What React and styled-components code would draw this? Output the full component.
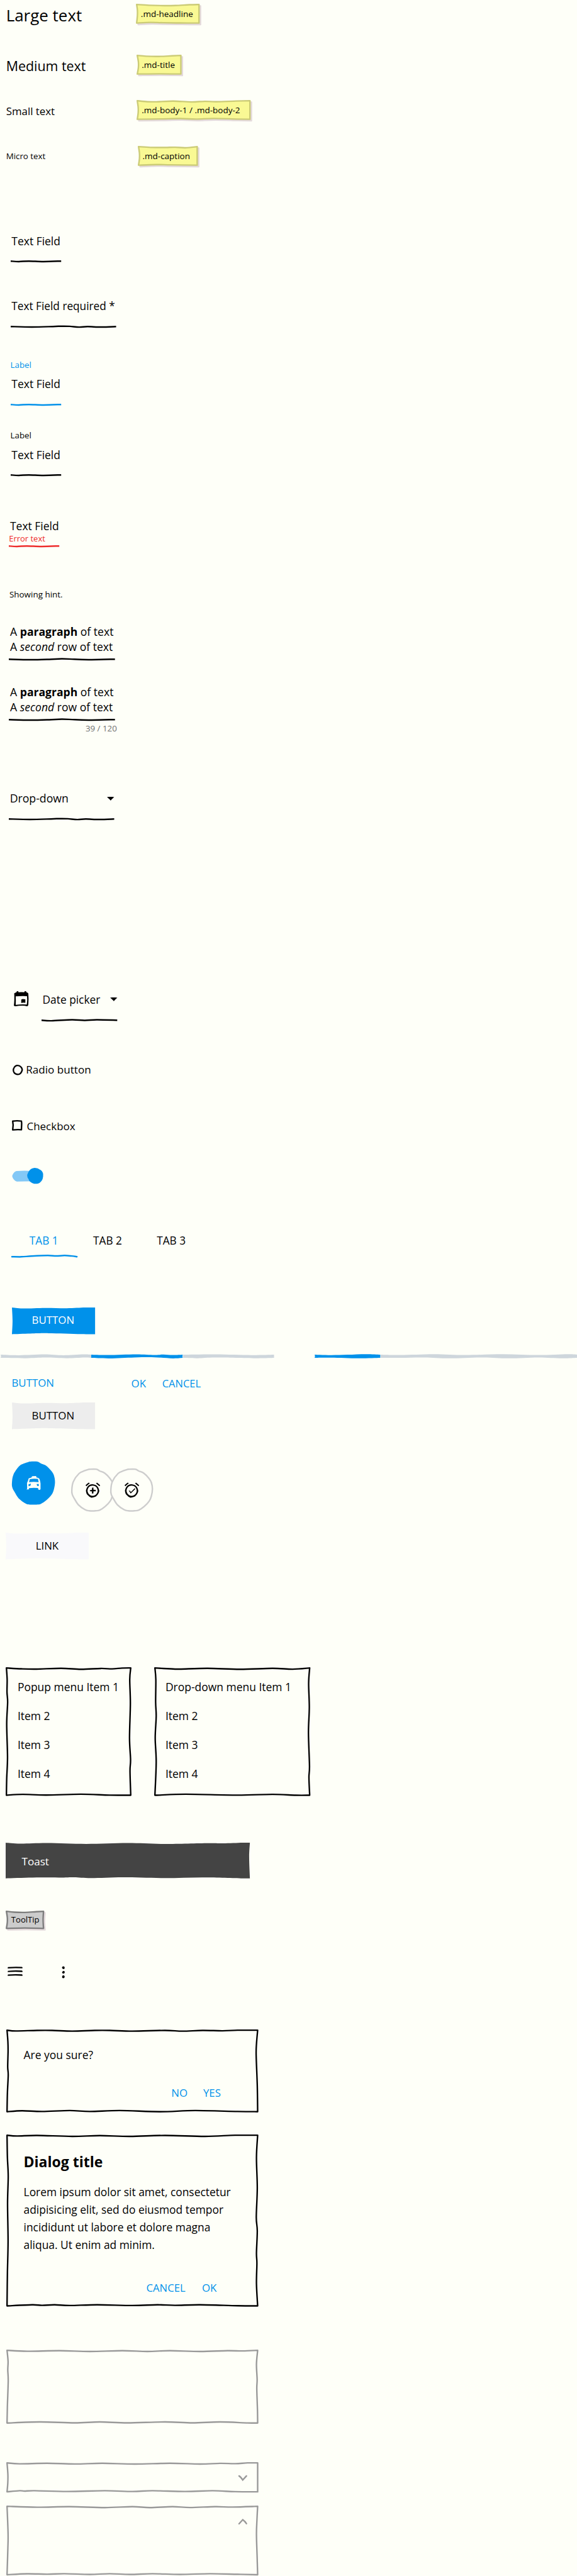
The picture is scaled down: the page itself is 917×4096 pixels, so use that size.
import React from "react";
import styled, { createGlobalStyle } from "styled-components";

/* Design units to CSS pixels */
const UNIT = 0.5899;
const u = (n = 0) => `${+(n * UNIT).toFixed(3)}px`;

const color = {
  paper: "#fefff8",
  ink: "#000000",
  accent: "#0091ea",
  accentSoft: "#83c8f6",
  error: "#ee2c2c",
  muted: "#6f6f6f",
  line: "#999999",
};

const GlobalStyle = createGlobalStyle`
  html, body { margin: 0; padding: 0; background: ${color.paper}; }
  * { box-sizing: border-box; }
`;

/* ---------- hand-drawn shapes ---------- */

const smooth = (pts) =>
  pts
    .slice(0, -1)
    .map((p, i) => {
      const a = pts[i - 1] || p;
      const b = pts[i + 1];
      const c = pts[i + 2] || b;
      const n = [
        p[0] + (b[0] - a[0]) / 6,
        p[1] + (b[1] - a[1]) / 6,
        b[0] - (c[0] - p[0]) / 6,
        b[1] - (c[1] - p[1]) / 6,
        b[0],
        b[1],
      ];
      return `C${n.map((v) => v.toFixed(2)).join(" ")}`;
    })
    .join("");

const ends = (edge = []) => [[0, 0], ...edge, [100, 0]];

/* Each edge lists [percent along the edge, inward offset]. */
const framePath = (w, h, inset, { top, right, bottom, left }) => {
  const iw = w - inset * 2;
  const ih = h - inset * 2;
  const t = ends(top).map(([p, d]) => [inset + (iw * p) / 100, inset + d]);
  const r = ends(right).map(([p, d]) => [w - inset - d, inset + (ih * p) / 100]);
  const b = ends(bottom).map(([p, d]) => [inset + (iw * p) / 100, h - inset - d]).reverse();
  const l = ends(left).map(([p, d]) => [inset + d, inset + (ih * p) / 100]).reverse();
  return `M${inset} ${inset}${smooth(t)}${smooth(r)}${smooth(b)}${smooth(l)}Z`;
};

const Backdrop = styled.svg`
  position: absolute;
  inset: 0;
  width: 100%;
  height: 100%;
  overflow: visible;
  z-index: 0;
`;

const Drawing = styled.svg`
  display: block;
  flex: none;
  overflow: visible;
  width: ${(p) => u(p.$w)};
  height: ${(p) => u(p.$h)};
  margin-top: ${(p) => u(p.$mt)};
  margin-left: ${(p) => u(p.$ml)};
`;

function Sketch({ w, h, edges = {}, fill = "none", stroke, shadow }) {
  const d = framePath(w, h, stroke ? 2 : 0, edges);
  return (
    <Backdrop viewBox={`0 0 ${w} ${h}`} preserveAspectRatio="none" aria-hidden="true">
      {shadow && (
        <path d={d} transform="translate(4 4)" fill={shadow} stroke={shadow} strokeWidth="4" strokeLinejoin="round" />
      )}
      <path d={d} fill={fill} stroke={stroke || "none"} strokeWidth={stroke ? 4 : 0} strokeLinejoin="round" />
    </Backdrop>
  );
}

const waves = {
  short: [[16, 1.3], [36, 0], [65, 1.3]],
  long: [[20, 1.3], [40, 0], [49, -0.9], [56, -0.5], [65, 1.6], [73, 0.3], [86, 1.5]],
  para: [[20, 1.5], [38, 0.4], [50, -1.2], [62, 0.2], [78, 1.3]],
  date: [[13, 1.6], [40, -1.2], [57, 0.4], [73, -1.2]],
  tab: [[15, 0.3], [30, -1.5], [55, -3.2], [68, -1.9], [81, -3.2], [92, -1.8]],
};

function Underline({ w, gap, wave, stroke = color.ink, round }) {
  const pts = ends(waves[wave]).map(([p, d]) => [(w * p) / 100, 2 + d]);
  return (
    <Drawing $w={w} $h={4} $mt={gap} viewBox={`0 0 ${w} 4`} aria-hidden="true">
      <path
        d={`M0 2${smooth(pts)}`}
        fill="none"
        stroke={stroke}
        strokeWidth="4.2"
        strokeLinecap={round ? "round" : "butt"}
      />
    </Drawing>
  );
}

/* ---------- layout and text ---------- */

const Page = styled.main`
  width: 917px;
  height: 4096px;
  overflow: hidden;
  padding-top: ${u(10)};
  background: ${color.paper};
  color: ${color.ink};
  font-family: "Open Sans", "Noto Sans", sans-serif;
  font-size: ${u(29.6)};
`;

const Row = styled.div`
  display: flex;
  align-items: ${(p) => p.$align || "flex-start"};
  margin-top: ${(p) => u(p.$gap)};
  padding-left: ${(p) => u(p.$left)};
`;

const Text = styled.div`
  font-size: ${(p) => u(p.$size || 29.6)};
  line-height: ${(p) => u(p.$lh || 40)};
  font-weight: ${(p) => p.$weight || 400};
  color: ${(p) => p.$color || "inherit"};
  margin-left: ${(p) => u((p.$ml || 0) + 1.3)};
  margin-top: ${(p) => u(p.$mt)};
  padding-top: ${u(1.3)};
  margin-bottom: ${u(-1.3)};
  white-space: nowrap;
`;

const Sample = styled(Text)`
  flex: none;
  width: ${(p) => u(p.$w)};
  margin-left: 0;
  padding-left: ${u(16.4)};
`;

const Panel = styled.div`
  position: relative;
  flex: none;
  width: ${(p) => u(p.$w)};
  height: ${(p) => u(p.$h)};
  margin-left: ${(p) => u(p.$ml)};
`;

const PanelBody = styled.div`
  position: relative;
  padding: ${(p) => u(p.$top)} 0 0 ${(p) => u(p.$left)};
`;

const NoteText = styled(Text)`
  position: relative;
  padding-left: ${(p) => u(p.$pad)};
`;

function Note({ w, x, edges, children }) {
  return (
    <Panel $w={w} $h={54} $ml={x}>
      <Sketch w={w} h={54} edges={edges} fill="#f9f994" stroke="#cbcb76" shadow="#e4dadc" />
      <NoteText $size={22.9} $lh={54} $pad={12.2}>{children}</NoteText>
    </Panel>
  );
}

const FieldBox = styled.div`
  display: flex;
  flex-direction: column;
  align-items: flex-start;
  margin-top: ${(p) => u(p.$gap)};
  margin-left: ${(p) => u(p.$x)};
  width: ${(p) => u(p.$w)};
`;

const Caption = styled(Text)`
  align-self: ${(p) => (p.$end ? "flex-end" : "flex-start")};
  margin-right: ${(p) => (p.$end ? u(-5) : 0)};
`;

const SelectRow = styled.div`
  display: flex;
  justify-content: space-between;
  align-items: flex-start;
  width: 100%;
`;

function Caret({ mt }) {
  return (
    <Drawing $w={19.5} $h={10.5} $mt={mt} viewBox="0 0 19.5 10.5" aria-hidden="true">
      <path d="M0 .8C6 -.3 14 -.2 19.5 .8C16 3.5 12 7.5 10 10.3C7.5 6.5 4 4 0 .8Z" fill="#000" />
    </Drawing>
  );
}

/* ---------- buttons ---------- */

const buttonEdges = {
  top: [[13, 2.7], [40, 1.2], [66, 2], [88, 0]],
  bottom: [[22, 1.6], [44, 2.7], [83, 0.4]],
  left: [[50, 1.6]],
};

const ButtonText = styled(Text)`
  position: relative;
  margin-left: ${u(-2)};
  text-align: center;
  text-transform: uppercase;
`;

function Button({ fill, ink, children, lh = 68 }) {
  return (
    <Panel $w={224} $h={72}>
      <Sketch w={224} h={72} edges={buttonEdges} fill={fill} />
      <ButtonText $size={28.6} $lh={lh} $color={ink}>{children}</ButtonText>
    </Panel>
  );
}

const Action = styled(Text)`
  flex: none;
  width: ${(p) => u(p.$w)};
  color: ${color.accent};
`;

/* ---------- icons ---------- */

const CIRCLE = [
  [48, 0], [68, 0], [78, 5], [92, 11], [106, 25], [113, 37], [116, 55], [113, 75], [107, 89], [93, 104],
  [78, 114], [66, 116], [49, 116], [37, 113], [18, 99], [7, 82], [1, 70], [0, 57], [4, 35], [20, 12], [36, 4], [48, 0],
];
const circlePath = `M48 0${smooth(CIRCLE)}Z`;

function CalendarIcon() {
  return (
    <Drawing $w={40} $h={41} $mt={-2} viewBox="0 0 40 41" aria-hidden="true">
      <path
        fillRule="evenodd"
        d="M1 6C3 4.500 5 4 7 3L8 .5Q10.500 -.8 12 .5L12.500 3Q20 2 28 3L29 .5Q31 -.8 33 .5L34 3Q38 3.500 39 6.500Q40.500 20 39 37Q38.500 40 36 40.500Q33 40 30 39.300Q15 38.800 5 40.500Q2 41 0 39Q2 25 1 6ZM5 14Q20 12.800 35.500 13.500Q36.800 24 35 36.200Q22 35 5 36.800Q5.800 25 5 14Z"
      />
      <path d="M20 22.500L24 21.400L31 22L31 31.500L25.500 30.800L19.800 31.800Z" />
    </Drawing>
  );
}

function TaxiIcon() {
  return (
    <path
      transform="translate(40 39)"
      fill={color.paper}
      fillRule="evenodd"
      d="M13 2L15 .6L25 0L26 4L31 5L34 7.500L36 14L37 20L37 35Q36 38 31.500 37L30 32.300Q18 31 6 32.500L5.500 36.500L3 35.500L0 37.500L1 32L.5 19L3.500 12L5 6.500L13 4ZM8 8.300Q18 6 30 7.800L32 16.500Q18 15 6 16.500ZM4.500 22.500L11 20.500L10 26L5 27.500ZM26.500 21.500L32 21L32.500 26.500L28 26.800Z"
    />
  );
}

function AlarmIcon({ kind }) {
  return (
    <g transform="translate(39 38)">
      <path d="M0 7L8 0L11.500 1.500L2 10ZM28 2L31 0L39 7L38 10L34 7.500Z" />
      <path
        fillRule="evenodd"
        d="M1 21Q3 11 10 6.500Q19 2 28 7Q35 11 37 22Q36 30 28 37.500Q22 40 16 41Q10 39 7 35Q1 31 1 21ZM5.300 21.800C5.300 28 11 35.800 19 35.800C26.500 35.800 32.600 29 32.600 21.800C32.600 14 26.500 8 19 8C11.500 8 5.300 14 5.300 21.800Z"
      />
      {kind === "add" ? (
        <path d="M17.500 13.500L21 13.200L21.300 19.300L27.600 19.500L27.300 23.500L21.300 23.500L21 29.500L16.800 29.500L17.500 24L11.200 23L12 20.500L17 19.800Z" />
      ) : (
        <path d="M11 21.500L14.500 22L17 25.500L27 15.500L29 17L16.500 29.200Z" />
      )}
    </g>
  );
}

function Fab() {
  return (
    <Drawing $w={116} $h={116} viewBox="0 0 116 116" aria-label="Taxi">
      <path d={circlePath} fill={color.accent} />
      <TaxiIcon />
    </Drawing>
  );
}

function RoundIconButton({ kind, ml }) {
  return (
    <Drawing $w={116} $h={116} $mt={18} $ml={ml} viewBox="0 0 116 116" aria-label={kind}>
      <path
        d={circlePath}
        transform="translate(2 2) scale(.9655)"
        fill={color.paper}
        stroke="#cdcdcd"
        strokeWidth="4.200"
      />
      <AlarmIcon kind={kind} />
    </Drawing>
  );
}

/* ---------- progress ---------- */

function Segment({ w, fill, edges }) {
  return (
    <Panel $w={w} $h={8.6}>
      <Sketch w={w} h={8.6} edges={edges} fill={fill} />
    </Panel>
  );
}

const TRACK = "#ced6dc";

function Progress() {
  return (
    <Row $gap={56} $left={1}>
      <Segment
        w={245.5}
        fill={TRACK}
        edges={{
          top: [[20, 1.5], [48, -0.8], [69, 1.5], [91, -0.8]],
          bottom: [[28, -1], [49, 0.8], [73, -1], [92, 0.8]],
          left: [[50, 1]],
        }}
      />
      <Segment
        w={246.5}
        fill={color.accent}
        edges={{
          top: [[18, 1], [49, -1], [69, 0.8], [79, -0.4], [89, 1]],
          bottom: [[20, -1.5], [47, 1], [69, 1.5], [89, -1.5]],
          right: [[50, 0.5]],
        }}
      />
      <Segment
        w={245}
        fill={TRACK}
        edges={{ top: [[36, -0.8], [75, 1.2]], bottom: [[16, -1], [36, 1], [80, -1]] }}
      />
      <Panel $w={110} $h={8} />
      <Segment
        w={177}
        fill={color.accent}
        edges={{ top: [[25, 1.3], [50, 0.2], [78, -1.3]], bottom: [[25, 0.7], [67, -1.3]], left: [[50, 1]] }}
      />
      <Segment
        w={531}
        fill={TRACK}
        edges={{
          top: [[10, 1], [27, -1.3], [43, 1], [62, -1.3], [80, 1], [95, -1.3]],
          bottom: [[10, 0], [22, 1], [35, -1.3], [52, 1], [65, -1.3], [80, 1], [92, -1.3]],
        }}
      />
    </Row>
  );
}

/* ---------- menus ---------- */

const popupEdges = {
  top: [[12, 2.3], [24, 3], [44, 1], [60, 3.5], [76, 1.3], [85, 2.5], [93, 0.3]],
  bottom: [[13, 2.3], [32, 0.5], [60, 2.7], [83, 0.2]],
  left: [[9, 2], [19, 1.6], [27, 3.3], [44, 0.8], [70, 3], [87, 0.8]],
  right: [[9, 2.7], [28, 1], [55, 3.3], [72, 0.5], [81, 2]],
};
const dropEdges = {
  top: [[10, 2.3], [16, 3], [34, 1], [55, 3.5], [76, 1], [89, 3.3]],
  bottom: [[3, 0.3], [20, 2.7], [53, 0.3], [76, 2.3], [91, 0]],
  left: [[9, 2.5], [27, 2], [38, 3.5], [55, 0.8], [74, 3.5]],
  right: [[12, 2.8], [31, 1], [51, 3.3], [77, 0.5], [86, 2]],
};

function Menu({ w, ml, edges, items }) {
  return (
    <Panel $w={w} $h={347} $ml={ml}>
      <Sketch w={w} h={347} edges={edges} stroke={color.ink} />
      <PanelBody $top={13.2} $left={30}>
        {items.map((item) => (
          <Text key={item} $lh={78}>{item}</Text>
        ))}
      </PanelBody>
    </Panel>
  );
}

/* ---------- panels ---------- */

const confirmEdges = {
  top: [[3.5, 2], [12, 0.5], [18, 0.5], [26, 2.5], [35, 0.5], [41, 0.5], [50, 2.5], [63, 0.5], [70, 2.5], [78, 0.5], [86, 1.5], [92, 0]],
  bottom: [[6, 2.5], [14, 0.5], [25, 3], [33, 0.5], [45, 3], [61, 0], [75, 3], [92, 0.5]],
  left: [[14, 2.3], [26, 2.8], [45, 1.8], [55, 3.2], [77, 1]],
  right: [[17, 3.2], [31, 4], [68, 1]],
};
const dialogEdges = {
  top: [[4, 2], [12, 0.5], [26, 3], [37, 1], [49, 3], [63, 0.5], [79, 3], [91, 0]],
  bottom: [[10, 3], [14, 1.5], [19, 3], [25, 1], [36, 3], [50, 1], [60, 3], [67, 1.5], [77, 3], [92, 0.5]],
  left: [[13, 1], [24, 3.2], [40, 1.4], [62, 2.8], [81, 1]],
  right: [[13, 3.2], [31, 1], [48, 3.7], [56, 1], [69, 3.2], [75, 2], [87, 3.2]],
};
const cardEdges = {
  top: [[8, 2.5], [21, 1], [33, 3], [46, 1], [56, 3], [65, 1], [77, 3], [88, 1], [94, 1.7]],
  bottom: [[13, 3], [27, 0.5], [37, 3], [48, 0.5], [63, 3], [74, 0.5], [85, 3], [96, 0.3]],
  left: [[15, 2.8], [27, 2], [42, 3.2], [76, 1]],
  right: [[19, 3.2], [40, 1.4], [53, 2.3], [82, 0.5]],
};
const closedEdges = {
  top: [[5, 2.5], [16, 1], [27, 2.8], [38, 1], [51, 3], [65, 1], [77, 3], [85, 1.2], [91, 2], [96, 0]],
  bottom: [[5, 3], [7, 2], [11, 3], [24, 1], [39, 3], [50, 1], [58, 3], [71, 1], [82, 3], [91, 0.5]],
  left: [[40, 2.3], [70, 2]],
};
const openEdges = {
  top: [[12, 2.5], [25, 1], [39, 3.5], [50, 1], [57, 3.5], [66, 1], [73, 3.3], [83, 1], [90, 2]],
  bottom: [[8, 2.5], [16, 1.6], [23, 2.8], [33, 0.8], [41, 2.8], [49, 0.8], [58, 2.8], [69, 0.8], [81, 2.8], [92, 1.2]],
  left: [[40, 2.8], [62, 2.2]],
  right: [[20, 1.9], [41, 3.2], [74, 1.4]],
};
const toastEdges = {
  top: [[6, 2.7], [17, 1], [33, 3.3], [50, 1], [65, 3.3], [83, 1.2], [89, 1.8], [97, 0]],
  bottom: [[11, 2], [23, 2], [28, 2.7], [35, 0.5], [48, 2.7], [65, 0.7], [81, 2.5], [97, 0]],
  right: [[40, 2]],
};

function Chevron({ up }) {
  return (
    <Drawing $w={23} $h={15} $ml={625.5} viewBox="0 0 23 15" aria-hidden="true">
      <path
        d={up ? "M1.500 13.500L11.500 2.500Q19 8 21.500 13" : "M1.500 1.500Q6 4 11.500 12.500L21.500 1.500"}
        fill="none"
        stroke={color.line}
        strokeWidth="4"
        strokeLinecap="round"
      />
    </Drawing>
  );
}

function FramedPanel({ h, edges, stroke, children }) {
  return (
    <Panel $w={679.2} $h={h}>
      <Sketch w={679.2} h={h} edges={edges} stroke={stroke} />
      {children}
    </Panel>
  );
}

const chipTop = [[22, 2.2], [50, 2.8], [80, 1]];

export default function App() {
  return (
    <>
      <GlobalStyle />
      <Page>
        <Row>
          <Sample $w={366} $size={44} $lh={58}>Large text</Sample>
          <Note w={172} edges={{ top: [[20, 2], [45, 3], [62, 2.6], [85, 0.6]], bottom: [[22, 1.8], [42, 0.8], [70, 0.2]], left: [[30, 2], [60, 2]] }}>
            .md-headline
          </Note>
        </Row>
        <Row $gap={80}>
          <Sample $w={366} $size={36.3} $lh={56}>Medium text</Sample>
          <Note w={121.5} x={2.5} edges={{ top: [[20, 2], [50, 2.6], [80, 1]], bottom: [[50, 0.6]], left: [[35, 3], [65, 3]] }}>
            .md-title
          </Note>
        </Row>
        <Row $gap={66}>
          <Sample $w={366} $size={28.6} $lh={58}>Small text</Sample>
          <Note w={307.5} x={2.5} edges={{ top: [[9, 2.7], [17, 2.8], [32, 1], [48, 3.2], [60, 1.5], [70, 2.6], [88, 0.8]], bottom: [[20, 0.8], [38, 2], [52, 0.4], [68, 2.2], [88, 0.6]], left: [[35, 2.4], [65, 2.4]] }}>
            .md-body-1 / .md-body-2
          </Note>
        </Row>
        <Row $gap={66}>
          <Sample $w={366} $size={22.6} $lh={54}>Micro text</Sample>
          <Note w={162} x={4.5} edges={{ top: [[20, 2], [45, 2.2], [62, 1.6], [80, 3]], bottom: [[30, 1.6], [55, 0.8]], left: [[35, 2.4], [65, 2.4]] }}>
            .md-caption
          </Note>
        </Row>

        <FieldBox $gap={180.7} $x={28} $w={136}>
          <Text $ml={1.8}>Text Field</Text>
          <Underline w={136} gap={33.7} wave="short" />
        </FieldBox>
        <FieldBox $gap={97.7} $x={28} $w={284}>
          <Text $ml={1.8} $size={29.2}>Text Field required *</Text>
          <Underline w={284} gap={34.2} wave="long" />
        </FieldBox>
        <FieldBox $gap={86.2} $x={28} $w={136}>
          <Caption $size={22.6} $lh={30} $ml={-1.2} $color={color.accent}>Label</Caption>
          <Text $ml={1.8} $mt={15.9}>Text Field</Text>
          <Underline w={136} gap={33.6} wave="short" stroke={color.accent} />
        </FieldBox>
        <FieldBox $gap={65.7} $x={28} $w={136}>
          <Caption $size={22.6} $lh={30} $ml={-1.2}>Label</Caption>
          <Text $ml={1.8} $mt={17.3}>Text Field</Text>
          <Underline w={136} gap={33} wave="short" />
        </FieldBox>
        <FieldBox $gap={114.8} $x={24} $w={136}>
          <Text $ml={1.8}>Text Field</Text>
          <Caption $size={22} $lh={30} $ml={-1.2} $color={color.error}>Error text</Caption>
          <Underline w={136} gap={3.2} wave="short" stroke={color.error} />
        </FieldBox>
        <FieldBox $gap={113.7} $x={24} $w={286}>
          <Caption $size={22.8} $lh={30}>Showing hint.</Caption>
        </FieldBox>
        <FieldBox $gap={62} $x={24} $w={286}>
          <Text $ml={2} $lh={41.3} $size={29.8}>A <b>paragraph</b> of text</Text>
          <Text $ml={2} $lh={41.3} $size={29.8}>A <i>second</i> row of text</Text>
          <Underline w={286} gap={12} wave="para" />
        </FieldBox>
        <FieldBox $gap={65} $x={24} $w={286}>
          <Text $ml={2} $lh={41.5} $size={29.8}>A <b>paragraph</b> of text</Text>
          <Text $ml={2} $lh={41.5} $size={29.8}>A <i>second</i> row of text</Text>
          <Underline w={286} gap={12.2} wave="para" />
          <Caption $end $size={22.6} $lh={30} $mt={5.7} $color={color.muted}>39 / 120</Caption>
        </FieldBox>
        <FieldBox $gap={154} $x={24} $w={284}>
          <SelectRow>
            <Text $ml={1.2} $size={30}>Drop-down</Text>
            <Caret mt={15.5} />
          </SelectRow>
          <Underline w={284} gap={34.3} wave="long" />
        </FieldBox>

        <Row $gap={463.4} $left={38}>
          <CalendarIcon />
          <FieldBox $x={34} $w={204}>
            <SelectRow>
              <Text $ml={1.2} $size={29.4}>Date picker</Text>
              <Caret mt={15} />
            </SelectRow>
            <Underline w={204} gap={33.8} wave="date" />
          </FieldBox>
        </Row>
        <Row $gap={110.6} $left={34}>
          <Drawing $w={28} $h={28} $mt={7.7} viewBox="0 0 28 28" aria-hidden="true">
            <path
              d="M14 2C17 2 20 3.500 22.500 6Q26 9 26 14Q25 19 21 23.500Q18 26.300 14 26Q7 25.500 4 21Q1.500 17 2.200 12Q4 6 7.500 3.700Q10.500 1.800 14 2Z"
              fill="none"
              stroke="#000"
              strokeWidth="4"
            />
          </Drawing>
          <Text $ml={6.7} $size={29}>Radio button</Text>
        </Row>
        <Row $gap={112.6} $left={32.5}>
          <Drawing $w={28} $h={28} $mt={4.8} viewBox="0 0 28 28" aria-hidden="true">
            <path
              d="M2 3Q13 1 25.500 2.800Q26.500 8 26 14L25.500 26Q14 25 2 26.500Q4.500 14 2 3Z"
              fill="none"
              stroke="#000"
              strokeWidth="4"
              strokeLinejoin="round"
            />
          </Drawing>
          <Text $ml={10.2} $size={28.8}>Checkbox</Text>
        </Row>
        <Row $gap={94} $left={32}>
          <Drawing $w={84} $h={43} viewBox="0 0 84 43" aria-label="On">
            <path d="M12 8.500Q30 7 62 8.500L62 36Q30 36 13 37Q3 33 .5 22Q4 11 12 8.500Z" fill={color.accentSoft} />
            <path
              d="M61 0Q69 -.3 76 5Q82 8 84 16Q84.500 24 82.500 30Q79 39 70 42.500Q62 44 55 41Q47 38 45 31Q40.500 25 41 19Q43 12 47 7Q52 .7 61 0Z"
              fill={color.accent}
            />
          </Drawing>
        </Row>

        <Row $gap={130.7} $left={32.5}>
          <FieldBox $w={172}>
            <Text $size={29.2} $ml={45.5} $color={color.accent}>TAB 1</Text>
            <Underline w={175} gap={23.3} wave="tab" stroke={color.accent} round />
          </FieldBox>
          <Text $size={29.2} $ml={45.2}>TAB 2</Text>
          <Text $size={29.2} $ml={92.5}>TAB 3</Text>
        </Row>
        <Row $gap={134} $left={32}>
          <Button fill={color.accent} ink="#ffffff">Button</Button>
        </Row>
        <Progress />
        <Row $gap={46.3} $left={30}>
          <Action $w={321} $size={28.6}>BUTTON</Action>
          <Action $w={82} $size={28.6} $mt={1.6}>OK</Action>
          <Action $size={28} $mt={1.6} $w={120}>CANCEL</Action>
        </Row>
        <Row $gap={32} $left={32}>
          <Button fill="#ededed" ink="#000000">Button</Button>
        </Row>
        <Row $gap={87.5} $left={32}>
          <Fab />
          <RoundIconButton kind="add" ml={44} />
          <RoundIconButton kind="check" ml={-12} />
        </Row>
        <Row $gap={58} $left={16}>
          <Button fill="#f9f9fb" ink="#000000" lh={69}>Link</Button>
        </Row>

        <Row $gap={290} $left={16}>
          <Menu w={339} edges={popupEdges} items={["Popup menu Item 1", "Item 2", "Item 3", "Item 4"]} />
          <Menu w={421} ml={59.5} edges={dropEdges} items={["Drop-down menu Item 1", "Item 2", "Item 3", "Item 4"]} />
        </Row>

        <Row $gap={127} $left={16}>
          <Panel $w={658} $h={96}>
            <Sketch w={658} h={96} edges={toastEdges} fill="#444444" />
            <NoteText $size={29} $lh={97} $pad={41.2} $color="#ffffff">Toast</NoteText>
          </Panel>
        </Row>
        <Row $gap={86} $left={16}>
          <Panel $w={104} $h={50}>
            <Sketch
              w={104}
              h={50}
              edges={{ top: chipTop, bottom: [[50, 1.2]], left: [[35, 2.4], [65, 2.4]], right: [[50, 1.2]] }}
              fill="#cccccc"
              stroke="#7d7d7d"
              shadow="#e4dadc"
            />
            <NoteText $size={22.2} $lh={50} $pad={13}>ToolTip</NoteText>
          </Panel>
        </Row>
        <Row $gap={102} $left={20}>
          <Drawing $w={41} $h={32} viewBox="0 0 41 32" aria-label="Menu">
            {[0, 10, 20].map((y) => (
              <path key={y} transform={`translate(0 ${y})`} d="M1 1.300Q20 -.6 39 .8Q41.500 2.500 40 4.800Q20 3.200 .3 5Z" />
            ))}
          </Drawing>
          <Drawing $w={9} $h={32} $ml={105} viewBox="0 0 9 32" aria-label="More">
            <path d="M4.500 -.8Q8.500 -.5 8.200 3Q8 7 5 6.800Q1.500 6.500 .8 3Q1 -.5 4.500 -.8ZM5 11.500Q8.500 12 8.500 15Q8 19 5 19Q1 18 1 15.500Q2 12.500 5 11.500ZM4.500 23.500Q8 24 8.300 27Q7.500 31.500 4.500 31.600Q1 31 1 28Q1.500 24 4.500 23.500Z" />
          </Drawing>
        </Row>

        <Row $gap={137.5} $left={16.2}>
          <FramedPanel h={223.6} edges={confirmEdges} stroke={color.ink}>
            <PanelBody $top={48.1} $left={46.2}>
              <Text>Are you sure?</Text>
              <Row $gap={60.5} $left={398}>
                <Action $w={84.5} $size={28.6}>NO</Action>
                <Action $w={80} $size={28.6}>YES</Action>
              </Row>
            </PanelBody>
          </FramedPanel>
        </Row>
        <Row $gap={58.4} $left={16.2}>
          <FramedPanel h={464} edges={dialogEdges} stroke={color.ink}>
            <PanelBody $top={47.9} $left={46.2}>
              <Text $size={39} $lh={50} $weight={700}>Dialog title</Text>
              <Text $lh={47.6} $size={29.5} $mt={31.3}>
                Lorem ipsum dolor sit amet, consectetur
                <br />
                adipisicing elit, sed do eiusmod tempor
                <br />
                incididunt ut labore et dolore magna
                <br />
                aliqua. Ut enim ad minim.
              </Text>
              <Row $gap={73.1} $left={330.5}>
                <Action $w={148.5} $size={28.3}>CANCEL</Action>
                <Action $w={80} $size={28.6}>OK</Action>
              </Row>
            </PanelBody>
          </FramedPanel>
        </Row>

        <Row $gap={116} $left={16.2}>
          <FramedPanel h={200} edges={cardEdges} stroke={color.line} />
        </Row>
        <Row $gap={104} $left={16.2}>
          <FramedPanel h={82} edges={closedEdges} stroke={color.line}>
            <Row $gap={35}><Chevron /></Row>
          </FramedPanel>
        </Row>
        <Row $gap={35.5} $left={16.2}>
          <FramedPanel h={188.5} edges={openEdges} stroke={color.line}>
            <Row $gap={35}><Chevron up /></Row>
          </FramedPanel>
        </Row>
      </Page>
    </>
  );
}
